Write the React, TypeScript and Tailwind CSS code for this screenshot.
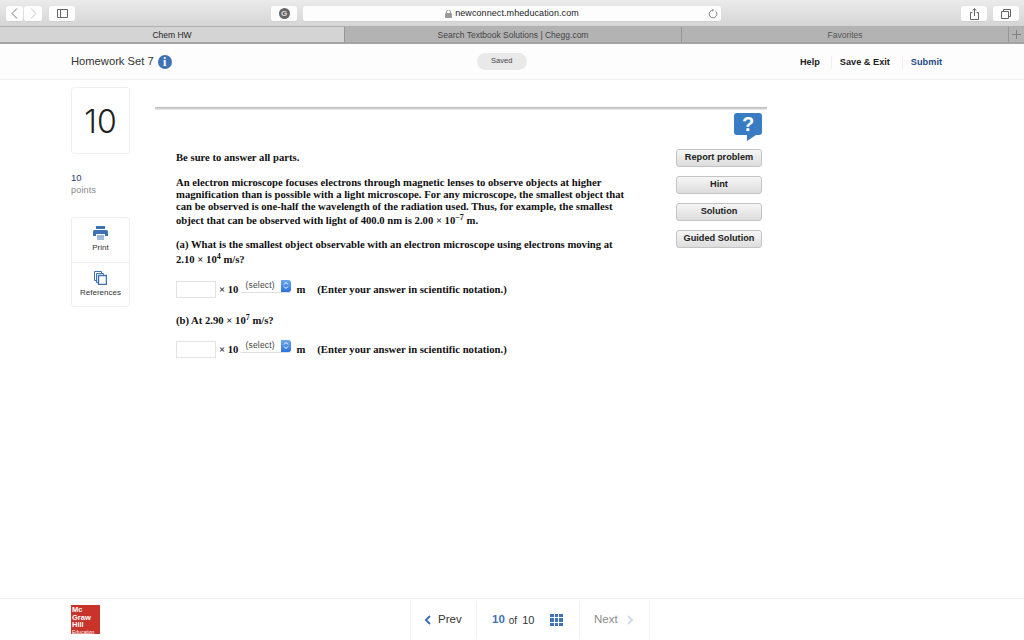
import React from 'react';

const ToolButton = ({ className, children }: { className: string; children: React.ReactNode }) => (
  <div className={`h-[16px] bg-[#fdfdfd] rounded-[3px] border-b border-[#cfcfcf] flex items-center justify-center ${className}`}>
    {children}
  </div>
);

const SideButton = ({ label }: { label: string }) => (
  <button className="w-[86px] h-[18px] rounded-[3px] border border-[#c4c4c4] bg-gradient-to-b from-[#f6f6f6] to-[#dddddd] text-[9.2px] font-bold text-[#222] flex items-center justify-center">
    {label}
  </button>
);

const SelectBox = () => (
  <span className="inline-flex h-[13px] w-[51px] ml-[2px] mr-[5px] rounded-[2px] bg-white border-b border-[#e0e0e0] overflow-hidden relative -top-[3px] font-['Liberation_Sans',sans-serif] font-normal">
    <span className="flex-1 text-[8.5px] leading-[11px] text-[#444] pl-[5px] tracking-[0.2px]">(select)</span>
    <span className="w-[10px] bg-gradient-to-b from-[#6fa8ef] to-[#2a72dc] rounded-r-[2px] flex items-center justify-center">
      <svg width="6" height="9" viewBox="0 0 6 9" fill="none" stroke="white" strokeWidth="1">
        <path d="M1 3.5 3 1.5 5 3.5M1 5.5 3 7.5 5 5.5" />
      </svg>
    </span>
  </span>
);

const AnswerRow = () => (
  <div className="flex items-center h-[18px]">
    <span className="w-[40px] h-[17px] border border-[#e2e2e2] bg-white mr-[3px]" />
    <span className="whitespace-nowrap">× 10</span>
    <SelectBox />
    <span>m</span>
    <span className="ml-[12px] whitespace-nowrap">(Enter your answer in scientific notation.)</span>
  </div>
);

export default function App() {
  return (
    <div className="w-[1024px] h-[640px] overflow-hidden bg-white flex flex-col font-['Liberation_Sans',sans-serif]">
      {/* safari toolbar */}
      <div className="h-[27px] shrink-0 bg-gradient-to-b from-[#ebebeb] to-[#d5d5d5] border-b border-[#b0b0b0] flex items-center pl-[6px] pr-[5px] pt-[2px]">
        <ToolButton className="w-[17px]">
          <svg width="7" height="11" viewBox="0 0 7 11" fill="none" stroke="#777" strokeWidth="1"><path d="M6 .5 1 5.5l5 5" /></svg>
        </ToolButton>
        <ToolButton className="w-[18px] ml-[1px]">
          <svg width="7" height="11" viewBox="0 0 7 11" fill="none" stroke="#c4c4c4" strokeWidth="1"><path d="m1 .5 5 5-5 5" /></svg>
        </ToolButton>
        <ToolButton className="w-[26px] ml-[7px]">
          <svg width="11" height="9" viewBox="0 0 11 9" fill="none" stroke="#666" strokeWidth="1"><path d="M.5.5h10v8H.5zM3.5.5v8" /></svg>
        </ToolButton>
        <ToolButton className="w-[26px] ml-[196px]">
          <span className="w-[11px] h-[11px] rounded-full bg-[#666] text-[#ddd] text-[8px] leading-[11px] font-bold text-center">G</span>
        </ToolButton>
        <ToolButton className="w-[418px] ml-[6px] relative">
          <svg className="mr-[3px]" width="7" height="8" viewBox="0 0 7 8" fill="#999"><rect y="3" width="7" height="5" rx="1" /><path d="M1.5 3V2a2 2 0 0 1 4 0v1" fill="none" stroke="#999" /></svg>
          <span className="text-[9px] text-[#222] tracking-[0.08px]">newconnect.mheducation.com</span>
          <svg className="absolute right-[3px] top-[3px]" width="10" height="10" viewBox="0 0 10 10" fill="none" stroke="#777" strokeWidth="0.9"><path d="M7.8 2.4a3.8 3.8 0 1 1-2.8-1.2M5 .1v2.2" /></svg>
        </ToolButton>
        <ToolButton className="w-[26px] ml-auto">
          <svg width="9" height="12" viewBox="0 0 9 12" fill="none" stroke="#666" strokeWidth="1"><path d="M2.5 4.5h-2v7h8v-7h-2M4.5 8V.8M2.6 2.5 4.5.7l1.9 1.8" /></svg>
        </ToolButton>
        <ToolButton className="w-[26px] ml-[6px]">
          <svg width="10" height="10" viewBox="0 0 10 10" fill="none" stroke="#666" strokeWidth="1"><path d="M.5 2.5h7v7h-7zM2.5 2.5v-2h7v7h-2" /></svg>
        </ToolButton>
      </div>

      {/* tab bar */}
      <div className="h-[17px] shrink-0 flex text-[8.5px] leading-[16px] text-center border-b-2 border-[#a4a4a4]">
        <div className="w-[344px] bg-[#d4d4d4] text-[#222]">Chem HW</div>
        <div className="w-[337px] bg-[#b3b3b3] border-l border-[#959595] text-[#444]">Search Textbook Solutions | Chegg.com</div>
        <div className="w-[327px] bg-[#b3b3b3] border-l border-[#959595] text-[#555]">Favorites</div>
        <div className="flex-1 bg-[#b3b3b3] border-l border-[#959595] flex items-center justify-center">
          <svg width="9" height="9" viewBox="0 0 9 9" stroke="#808080" strokeWidth="1"><path d="M4.5 0v9M0 4.5h9" /></svg>
        </div>
      </div>

      {/* assignment header */}
      <div className="h-[36px] shrink-0 bg-[#fdfdfd] border-b border-[#efefef] flex items-center pl-[71px] pr-[81px]">
        <span className="text-[11.2px] text-[#333] whitespace-nowrap">Homework Set 7</span>
        <span className="w-[14px] h-[14px] ml-[4px] rounded-full bg-[#3f72b5] text-white text-[12px] leading-[14px] font-bold text-center font-['Liberation_Serif',serif]">i</span>
        <div className="w-[50px] h-[17px] ml-[305px] rounded-full bg-[#e9e9e9] text-[7.5px] leading-[15px] text-center text-[#444]">Saved</div>
        <div className="ml-auto flex items-center text-[9.2px] font-bold h-[15px] mt-[2px]">
          <span className="text-[#222] pr-[11px] border-r border-[#efefef]">Help</span>
          <span className="text-[#222] pl-[8px] pr-[12px] border-r border-[#efefef]">Save &amp; Exit</span>
          <span className="text-[#254a86] pl-[8px] pr-[1px]">Submit</span>
        </div>
      </div>

      {/* question area */}
      <div className="flex-1 flex pl-[71px] min-h-0">
        <div className="w-[59px] shrink-0 pt-[7px]">
          <div className="h-[67px] pt-[2px] rounded-[3px] border border-[#efefef] flex items-center justify-center text-[32px] text-[#222] font-['Inter',sans-serif] font-light">10</div>
          <div className="mt-[17px] text-[9.5px] leading-[13px] text-[#26406e]">10</div>
          <div className="text-[9px] leading-[13px] text-[#888] tracking-[0.2px]">points</div>
          <div className="mt-[20px] rounded-[3px] border border-[#efefef]">
            <div className="h-[45px] flex flex-col items-center pt-[8px] border-b border-[#efefef]">
              <svg width="15" height="14" viewBox="0 0 15 14" fill="#3f72b5"><path d="M3 0h9v3H3zM1.5 4h12A1.5 1.5 0 0 1 15 5.5V10h-3V8H3v2H0V5.5A1.5 1.5 0 0 1 1.5 4z" /><path d="M4 9h7v5H4z" fill="#9db8da" /></svg>
              <span className="text-[8px] leading-[11px] mt-[2px] text-[#333]">Print</span>
            </div>
            <div className="h-[43px] flex flex-col items-center pt-[8px]">
              <svg width="13" height="14" viewBox="0 0 13 14" fill="none" stroke="#3f72b5" strokeWidth="1"><path d="M.5.5h7v2M.5.5v9h2" /><path d="M2.5 2.5h7v2M2.5 2.5v9h2" /><path d="M4.5 4.5h8v9h-8z" strokeWidth="1.5" /></svg>
              <span className="text-[8px] leading-[11px] mt-[2px] text-[#333]">References</span>
            </div>
          </div>
        </div>

        <div className="w-[612px] ml-[25px] shrink-0 flex flex-col">
          <div className="h-[3px] mt-[27px] bg-gradient-to-b from-[#b5b5b5] to-[#eeeeee]" />
          <div className="flex justify-between">
            <div className="ml-[21px] mt-[41px] w-[450px] font-['Liberation_Serif',serif] font-bold text-[10.67px] leading-[12px] text-[#111]">
              <p>Be sure to answer all parts.</p>
              <div className="mt-[13px]">
                <p className="whitespace-nowrap">An electron microscope focuses electrons through magnetic lenses to observe objects at higher</p>
                <p className="whitespace-nowrap">magnification than is possible with a light microscope. For any microscope, the smallest object that</p>
                <p className="whitespace-nowrap">can be observed is one-half the wavelength of the radiation used. Thus, for example, the smallest</p>
                <p className="whitespace-nowrap mt-[2px]">object that can be observed with light of 400.0 nm is 2.00 × 10<sup className="text-[8px] leading-none">−7</sup> m.</p>
              </div>
              <div className="mt-[12px]">
                <p className="whitespace-nowrap">(a) What is the smallest object observable with an electron microscope using electrons moving at</p>
                <p className="mt-[3px]">2.10 × 10<sup className="text-[8px] leading-none">4</sup> m/s?</p>
              </div>
              <div className="mt-[15px]"><AnswerRow /></div>
              <p className="mt-[16px]">(b) At 2.90 × 10<sup className="text-[8px] leading-none">7</sup> m/s?</p>
              <div className="mt-[14px]"><AnswerRow /></div>
            </div>
            <div className="flex flex-col items-end pr-[5px] pt-[3px]">
              <svg width="28" height="28" viewBox="0 0 28 28">
                <path d="M3 0h22a3 3 0 0 1 3 3v16a3 3 0 0 1-3 3h-3l-9 6v-6H3a3 3 0 0 1-3-3V3a3 3 0 0 1 3-3z" fill="#3a7cc4" />
                <text x="14" y="18" textAnchor="middle" fontSize="20" fontWeight="bold" fill="#fff" fontFamily="Liberation Sans">?</text>
              </svg>
              <div className="mt-[8px] flex flex-col gap-[9px]">
                <SideButton label="Report problem" />
                <SideButton label="Hint" />
                <SideButton label="Solution" />
                <SideButton label="Guided Solution" />
              </div>
            </div>
          </div>
        </div>
      </div>

      {/* footer nav */}
      <div className="h-[42px] shrink-0 border-t border-[#efefef] flex pl-[71px]">
        <div className="w-[29px] h-[29px] mt-[6px] bg-[#c8332b] text-white text-[7.5px] leading-[7.5px] font-bold pl-[1px] pt-[1px]">
          <div>Mc</div>
          <div>Graw</div>
          <div>Hill</div>
          <div className="text-[5px] leading-[6px] font-normal">Education</div>
        </div>
        <div className="ml-[310px] flex h-[40px] pt-[2px] text-[11.5px] border-x border-[#f3f3f3]">
          <div className="w-[66px] flex items-center pl-[13px] text-[#333] border-r border-[#f3f3f3]">
            <svg className="mr-[7px]" width="7" height="10" viewBox="0 0 7 10" fill="none" stroke="#3f72b5" strokeWidth="2"><path d="M6 1 2 5l4 4" /></svg>
            Prev
          </div>
          <div className="w-[103px] flex items-center pl-[15px] border-r border-[#f3f3f3] text-[#333]">
            <span className="font-bold text-[#3f72b5]">10</span>
            <span className="text-[10px] ml-[4px]">of</span>
            <span className="text-[11px] ml-[5px]">10</span>
            <div className="ml-[16px] grid grid-cols-3 gap-[1px]">
              {Array.from({ length: 9 }).map((_, i) => (
                <span key={i} className="w-[3.5px] h-[3.5px] bg-[#3f72b5]" />
              ))}
            </div>
          </div>
          <div className="w-[69px] flex items-center pl-[14px] text-[#8a8a8a]">
            Next
            <svg className="ml-[9px]" width="7" height="10" viewBox="0 0 7 10" fill="none" stroke="#cfdcec" strokeWidth="2"><path d="m1 1 4 4-4 4" /></svg>
          </div>
        </div>
      </div>
    </div>
  );
}
